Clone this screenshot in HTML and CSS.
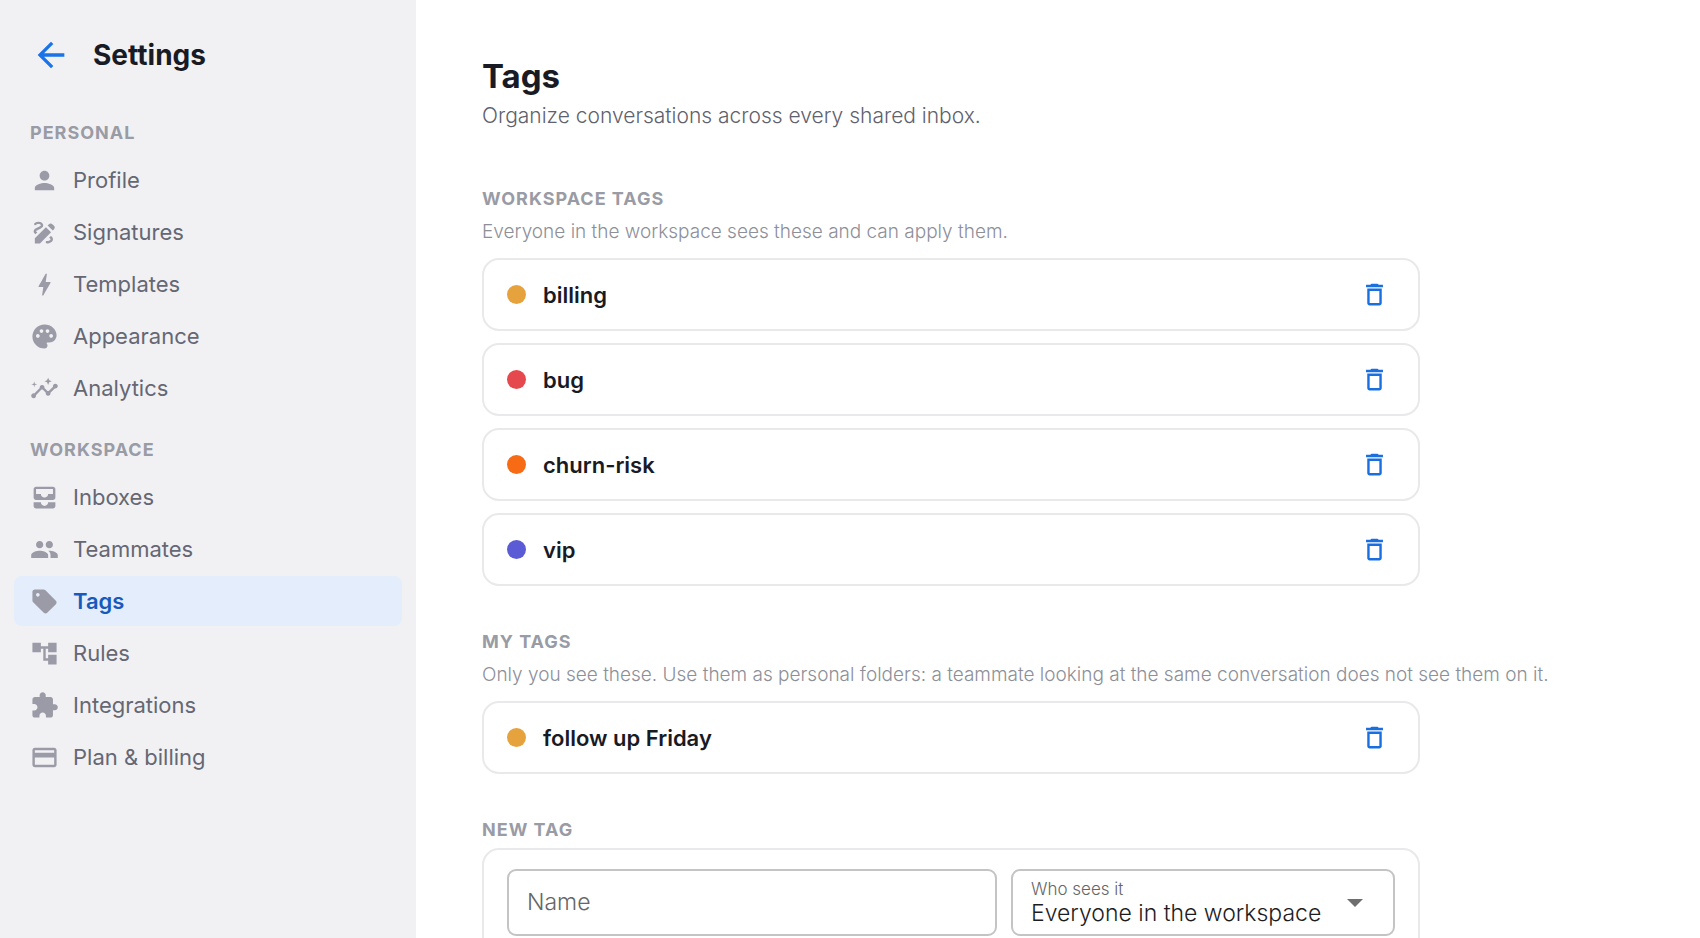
FILE: index.html
```html
<!DOCTYPE html>
<html lang="en">
<head>
    <meta charset="UTF-8">
    <meta name="viewport" content="width=device-width, initial-scale=1.0">
    <title>Settings</title>
    <link rel="stylesheet" href="styles.css">
</head>
<body>
    <div class="layout">
        <aside class="sidebar">
            <div class="sidebar-head">
                <button type="button" class="back" aria-label="Back">
                    <svg viewBox="0 0 24 24"><path d="M20 11H7.83l5.59-5.59L12 4l-8 8 8 8 1.41-1.41L7.83 13H20v-2z"/></svg>
                </button>
                <h2>Settings</h2>
            </div>
            <nav>
                <h3 class="caption">PERSONAL</h3>
                <ul>
                    <li><a href="#profile"><svg viewBox="0 0 24 24"><path d="M12 12c2.21 0 4-1.79 4-4s-1.79-4-4-4-4 1.79-4 4 1.79 4 4 4zm0 2c-2.67 0-8 1.34-8 4v2h16v-2c0-2.66-5.33-4-8-4z"/></svg>Profile</a></li>
                    <li><a href="#signatures"><svg viewBox="0 0 24 24"><path d="M18.85 10.39l1.06-1.06c.78-.78.78-2.05 0-2.83L18.5 5.09c-.78-.78-2.05-.78-2.83 0l-1.06 1.06 4.24 4.24zm-5.66-2.83L4 16.76V21h4.24l9.19-9.19-4.24-4.25zM19 17.5c0 2.19-2.54 3.5-5 3.5-.55 0-1-.45-1-1s.45-1 1-1c1.54 0 3-.73 3-1.5 0-.47-.48-.87-1.23-1.2l1.48-1.48c1.07.63 1.75 1.47 1.75 2.68zM4.58 13.35C3.61 12.79 3 12.06 3 11c0-1.8 1.89-2.63 3.56-3.36C7.59 7.18 9 6.56 9 6c0-.41-.78-1-2-1-1.26 0-1.8.61-1.83.64-.35.41-.98.46-1.4.12-.41-.34-.49-.95-.15-1.38C3.73 4.24 4.76 3 7 3s4 1.32 4 3c0 1.87-1.93 2.72-3.64 3.47C6.42 9.88 5 10.5 5 11c0 .31.43.6 1.07.86l-1.49 1.49z"/></svg>Signatures</a></li>
                    <li><a href="#templates"><svg viewBox="0 0 24 24"><path d="M11 21h-1l1-7H7.5c-.58 0-.57-.32-.38-.66.19-.34.05-.08.07-.12C8.48 10.94 10.42 7.54 13 3h1l-1 7h3.5c.49 0 .56.33.47.51l-.07.15C12.96 17.55 11 21 11 21z"/></svg>Templates</a></li>
                    <li><a href="#appearance"><svg viewBox="0 0 24 24"><path d="M12 2C6.49 2 2 6.49 2 12s4.49 10 10 10c1.38 0 2.5-1.12 2.5-2.5 0-.61-.23-1.2-.64-1.67-.08-.1-.13-.21-.13-.33 0-.28.22-.5.5-.5H16c3.31 0 6-2.69 6-6 0-4.96-4.49-9-10-9zm5.5 11c-.83 0-1.5-.67-1.5-1.5s.67-1.5 1.5-1.5 1.5.67 1.5 1.5-.67 1.5-1.5 1.5zm-3-4c-.83 0-1.5-.67-1.5-1.5S13.67 6 14.5 6s1.5.67 1.5 1.5S15.33 9 14.5 9zM5 11.5c0-.83.67-1.5 1.5-1.5s1.5.67 1.5 1.5S7.33 13 6.5 13 5 12.33 5 11.5zm6-4c0 .83-.67 1.5-1.5 1.5S8 8.33 8 7.5 8.67 6 9.5 6s1.5.67 1.5 1.5z"/></svg>Appearance</a></li>
                    <li><a href="#analytics"><svg viewBox="0 0 24 24"><path d="M21 8c-1.45 0-2.26 1.44-1.93 2.51l-3.55 3.56c-.3-.09-.74-.09-1.04 0l-2.55-2.55C12.27 10.45 11.46 9 10 9c-1.45 0-2.27 1.44-1.93 2.52l-4.56 4.55C2.44 15.74 1 16.55 1 18c0 1.1.9 2 2 2 1.45 0 2.26-1.44 1.93-2.51l4.55-4.56c.3.09.74.09 1.04 0l2.55 2.55C12.73 16.55 13.54 18 15 18c1.45 0 2.27-1.44 1.93-2.52l3.56-3.55C21.56 12.26 23 11.45 23 10c0-1.1-.9-2-2-2z"/><path d="M15 9l.94-2.07L18 6l-2.06-.93L15 3l-.92 2.07L12 6l2.08.93zM3.5 11L4 9l2-.5L4 8l-.5-2L3 8l-2 .5L3 9z"/></svg>Analytics</a></li>
                </ul>
                <h3 class="caption">WORKSPACE</h3>
                <ul>
                    <li><a href="#inboxes"><svg viewBox="0 0 24 24"><path d="M19 3H5c-1.1 0-2 .9-2 2v7c0 1.1.9 2 2 2h14c1.1 0 2-.9 2-2V5c0-1.1-.9-2-2-2zm0 6h-4c0 1.62-1.38 3-3 3s-3-1.38-3-3H5V5h14v4zm-4 7h6v3c0 1.1-.9 2-2 2H5c-1.1 0-2-.9-2-2v-3h6c0 1.66 1.34 3 3 3s3-1.34 3-3z"/></svg>Inboxes</a></li>
                    <li><a href="#teammates"><svg viewBox="0 0 24 24"><path d="M16 11c1.66 0 2.99-1.34 2.99-3S17.66 5 16 5c-1.66 0-3 1.34-3 3s1.34 3 3 3zm-8 0c1.66 0 2.99-1.34 2.99-3S9.66 5 8 5C6.34 5 5 6.34 5 8s1.34 3 3 3zm0 2c-2.33 0-7 1.17-7 3.5V19h14v-2.5c0-2.33-4.67-3.5-7-3.5zm8 0c-.29 0-.62.02-.97.05 1.16.84 1.97 1.97 1.97 3.45V19h6v-2.5c0-2.33-4.67-3.5-7-3.5z"/></svg>Teammates</a></li>
                    <li><a href="#tags" class="active" aria-current="page"><svg viewBox="0 0 24 24"><path d="M21.41 11.41l-8.83-8.83c-.37-.37-.88-.58-1.41-.58H4c-1.1 0-2 .9-2 2v7.17c0 .53.21 1.04.59 1.41l8.83 8.83c.78.78 2.05.78 2.83 0l7.17-7.17c.78-.78.78-2.04-.01-2.83zM6.5 8C5.67 8 5 7.33 5 6.5S5.67 5 6.5 5 8 5.67 8 6.5 7.33 8 6.5 8z"/></svg>Tags</a></li>
                    <li><a href="#rules"><svg viewBox="0 0 24 24"><path d="M22 11V3h-7v3H9V3H2v8h7V8h2v10h4v3h7v-8h-7v3h-2V8h2v3z"/></svg>Rules</a></li>
                    <li><a href="#integrations"><svg viewBox="0 0 24 24"><path d="M20.5 11H19V7c0-1.1-.9-2-2-2h-4V3.5C13 2.12 11.88 1 10.5 1S8 2.12 8 3.5V5H4c-1.1 0-1.99.9-1.99 2v3.8H3.5c1.49 0 2.7 1.21 2.7 2.7s-1.21 2.7-2.7 2.7H2V20c0 1.1.9 2 2 2h3.8v-1.5c0-1.49 1.21-2.7 2.7-2.7 1.49 0 2.7 1.21 2.7 2.7V22H17c1.1 0 2-.9 2-2v-4h1.5c1.38 0 2.5-1.12 2.5-2.5S21.88 11 20.5 11z"/></svg>Integrations</a></li>
                    <li><a href="#billing"><svg viewBox="0 0 24 24"><path d="M20 4H4c-1.11 0-1.99.89-1.99 2L2 18c0 1.11.89 2 2 2h16c1.11 0 2-.89 2-2V6c0-1.11-.89-2-2-2zm0 14H4v-6h16v6zm0-10H4V6h16v2z"/></svg>Plan &amp; billing</a></li>
                </ul>
            </nav>
        </aside>

        <main class="content">
            <h1>Tags</h1>
            <p class="subtitle">Organize conversations across every shared inbox.</p>

            <section>
                <h3 class="caption">WORKSPACE TAGS</h3>
                <p class="help">Everyone in the workspace sees these and can apply them.</p>
                <ul class="tags">
                    <li class="card tag">
                        <span class="dot amber"></span><span class="name">billing</span>
                        <button type="button" class="delete" aria-label="Delete billing"><svg viewBox="0 0 24 24"><path d="M6 19c0 1.1.9 2 2 2h8c1.1 0 2-.9 2-2V7H6v12zM8 9h8v10H8V9zm7.5-5l-1-1h-5l-1 1H5v2h14V4h-3.5z"/></svg></button>
                    </li>
                    <li class="card tag">
                        <span class="dot red"></span><span class="name">bug</span>
                        <button type="button" class="delete" aria-label="Delete bug"><svg viewBox="0 0 24 24"><path d="M6 19c0 1.1.9 2 2 2h8c1.1 0 2-.9 2-2V7H6v12zM8 9h8v10H8V9zm7.5-5l-1-1h-5l-1 1H5v2h14V4h-3.5z"/></svg></button>
                    </li>
                    <li class="card tag">
                        <span class="dot orange"></span><span class="name">churn-risk</span>
                        <button type="button" class="delete" aria-label="Delete churn-risk"><svg viewBox="0 0 24 24"><path d="M6 19c0 1.1.9 2 2 2h8c1.1 0 2-.9 2-2V7H6v12zM8 9h8v10H8V9zm7.5-5l-1-1h-5l-1 1H5v2h14V4h-3.5z"/></svg></button>
                    </li>
                    <li class="card tag">
                        <span class="dot indigo"></span><span class="name">vip</span>
                        <button type="button" class="delete" aria-label="Delete vip"><svg viewBox="0 0 24 24"><path d="M6 19c0 1.1.9 2 2 2h8c1.1 0 2-.9 2-2V7H6v12zM8 9h8v10H8V9zm7.5-5l-1-1h-5l-1 1H5v2h14V4h-3.5z"/></svg></button>
                    </li>
                </ul>
            </section>

            <section>
                <h3 class="caption">MY TAGS</h3>
                <p class="help">Only you see these. Use them as personal folders: a teammate looking at the same conversation does not see them on it.</p>
                <ul class="tags">
                    <li class="card tag">
                        <span class="dot amber"></span><span class="name">follow up Friday</span>
                        <button type="button" class="delete" aria-label="Delete follow up Friday"><svg viewBox="0 0 24 24"><path d="M6 19c0 1.1.9 2 2 2h8c1.1 0 2-.9 2-2V7H6v12zM8 9h8v10H8V9zm7.5-5l-1-1h-5l-1 1H5v2h14V4h-3.5z"/></svg></button>
                    </li>
                </ul>
            </section>

            <section>
                <h3 class="caption">NEW TAG</h3>
                <form class="card new-tag">
                    <div class="field field-name">
                        <input type="text" id="tag-name" placeholder=" ">
                        <label for="tag-name">Name</label>
                    </div>
                    <div class="field field-scope">
                        <select id="tag-scope">
                            <option>Everyone in the workspace</option>
                        </select>
                        <label for="tag-scope">Who sees it</label>
                        <svg class="arrow" viewBox="0 0 10 5"><path d="M0 0h10L5 5z"/></svg>
                    </div>
                </form>
            </section>
        </main>
    </div>
</body>
</html>
```

FILE: styles.css
```css
*{
    box-sizing: border-box;
}
body{
    margin: 0;
    font-family: Inter, "Liberation Sans", sans-serif;
    font-size: 22px;
    color: #191b24;
    background: #fff;
}
h1,h2,h3,p,ul{
    margin: 0;
    padding: 0;
}
ul{
    list-style: none;
}
button{
    display: flex;
    padding: 0;
    border: 0;
    background: none;
    cursor: pointer;
}
svg{
    display: block;
    fill: currentColor;
}
.layout{
    display: flex;
    height: 100vh;
    overflow: hidden;
}
.caption{
    font-size: 18px;
    line-height: 24px;
    font-weight: 700;
    letter-spacing: 1px;
    color: #999ba5;
}

/* sidebar */
.sidebar{
    flex: 0 0 416px;
    padding: 35px 14px;
    background: #f1f1f4;
}
.sidebar-head{
    display: flex;
    align-items: center;
    gap: 22px;
    height: 40px;
    padding-left: 17px;
}
.sidebar-head h2{
    font-size: 28px;
    font-weight: 700;
}
.back{
    color: #1a73e8;
}
.back svg{
    width: 40px;
    height: 40px;
}
.sidebar .caption{
    padding: 0 16px;
    margin: 25px 0 10px;
}
.sidebar-head + nav{
    padding-top: 21px;
}
.sidebar ul{
    display: flex;
    flex-direction: column;
    gap: 2px;
}
.sidebar a{
    display: flex;
    align-items: center;
    gap: 14px;
    height: 50px;
    padding: 0 16px;
    border-radius: 8px;
    color: #656773;
    text-decoration: none;
}
.sidebar a svg{
    width: 29px;
    height: 29px;
    color: #9a9ba6;
}
.sidebar .active{
    background: #e3edfc;
    color: #185abc;
    font-weight: 600;
}

/* content */
.content{
    flex: 1;
    min-width: 0;
    padding: 53px 66px;
}
h1{
    font-size: 33px;
    line-height: 46px;
    font-weight: 700;
}
.subtitle{
    font-size: 21px;
    line-height: 34px;
    font-weight: 300;
    color: #5f616d;
}
section{
    margin-top: 44px;
}
.subtitle + section{
    margin-top: 54px;
}
.help{
    margin: 6px 0 12px;
    font-size: 19px;
    line-height: 29px;
    font-weight: 300;
    color: #8d8f99;
}
.card{
    max-width: 938px;
    border: 2px solid #e9e9eb;
    border-radius: 17px;
}
.tags{
    display: flex;
    flex-direction: column;
    gap: 12px;
}
.tag{
    display: flex;
    align-items: center;
    gap: 17px;
    height: 73px;
    padding: 0 29px 0 23px;
}
.dot{
    width: 19px;
    height: 19px;
    border-radius: 50%;
}
.amber{
    background: #e6a23c;
}
.red{
    background: #e5484d;
}
.orange{
    background: #f76b15;
}
.indigo{
    background: #5b5bd6;
}
.name{
    flex: 1;
    font-weight: 600;
}
.delete{
    color: #1a6fe0;
}
.delete svg{
    width: 29px;
    height: 29px;
}

/* new tag form */
.new-tag{
    display: flex;
    gap: 14px;
    margin-top: 6px;
    padding: 19px 23px;
}
.field{
    position: relative;
    height: 67px;
}
.field-name{
    flex: 1;
}
.field-scope{
    flex: 0 0 384px;
}
.field input,.field select{
    width: 100%;
    height: 100%;
    padding: 20px 18px 0;
    border: 2px solid #c4c4c4;
    border-radius: 9px;
    background: none;
    color: #1d1d1f;
    font-family: inherit;
    font-size: 23px;
    font-weight: 300;
    appearance: none;
}
.field label{
    position: absolute;
    left: 20px;
    top: 9px;
    font-size: 17px;
    line-height: 22px;
    font-weight: 300;
    color: #666;
    pointer-events: none;
}
.field input:placeholder-shown + label{
    top: 18px;
    font-size: 23px;
    line-height: 30px;
}
.arrow{
    position: absolute;
    right: 32px;
    top: 30px;
    width: 16px;
    height: 8px;
    color: #6e6e6e;
    pointer-events: none;
}
```
